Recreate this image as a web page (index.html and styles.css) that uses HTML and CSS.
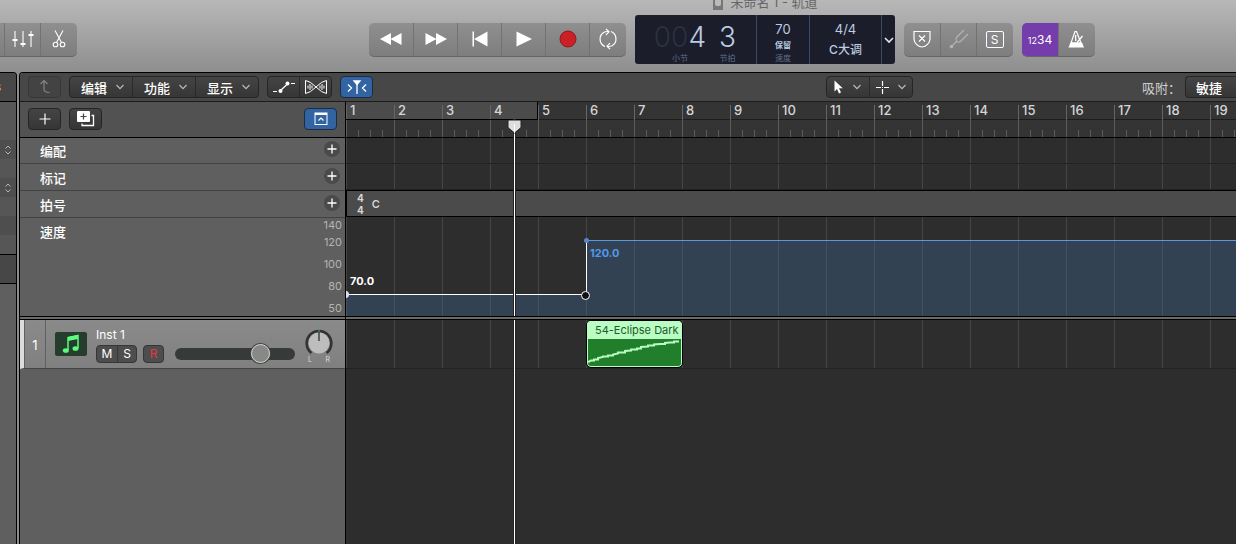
FILE: index.html
```html
<!DOCTYPE html>
<html lang="zh-CN">

<head>
    <meta charset="UTF-8">
    <meta name="viewport" content="width=device-width, initial-scale=1.0">
    <title>未命名 1 - 轨道</title>
    <link rel="stylesheet" href="styles.css">
</head>

<body>
    <!-- shared small glyphs -->
    <svg class="defs" width="0" height="0">
        <symbol id="chevron" viewBox="0 0 10 8"><path d="M1.5 2L5 5.7L8.500 2" fill="none" stroke="currentColor" stroke-width="1.2"/></symbol>
        <symbol id="plus" viewBox="0 0 16 16"><path d="M8 3.500V12.500M3.500 8H12.500" fill="none" stroke="#fff" stroke-width="1.300"/></symbol>
        <symbol id="updown" viewBox="0 0 8 10"><path d="M1.500 3.500L4 1L6.500 3.500M1.500 6.500L4 9L6.500 6.500" fill="none" stroke="#b4b4b4"/></symbol>
    </svg>

    <header class="topbar">
        <div class="title">
            <svg width="12" height="14" viewBox="0 0 12 14"><rect x="1" y="0" width="10" height="13" fill="#777"/><rect x="3" y="2" width="6" height="7" rx="2" fill="#bbb"/></svg>
            <span>未命名 1 - 轨道</span>
        </div>
        <div class="controls">
            <div class="button-group left-group">
                <button aria-label="智能控制"></button>
                <button aria-label="混音器">
                    <svg width="22" height="18" viewBox="0 0 22 18"><path d="M3 1V17M11 1V17M19 1V17" stroke="#fff" stroke-width="1.100"/><path d="M.5 10H5.500M8.500 14H13.500M16.500 5H21.500" stroke="#fff" stroke-width="2"/></svg>
                </button>
                <button aria-label="编辑器">
                    <svg width="14" height="18" viewBox="0 0 14 18" fill="none" stroke="#fff" stroke-width="1.100"><path d="M3 .5L9.500 12.500M11 .5L4.500 12.500"/><circle cx="3.500" cy="14.500" r="2.300"/><circle cx="10.500" cy="14.500" r="2.300"/></svg>
                </button>
            </div>
            <div class="spacer-left"></div>
            <div class="button-group transport">
                <button aria-label="倒回"><svg width="22" height="12" viewBox="0 0 22 12" fill="#fff"><path d="M11 0V12L0 6zM21.500 0V12L10.500 6z"/></svg></button>
                <button aria-label="快进"><svg width="22" height="12" viewBox="0 0 22 12" fill="#fff"><path d="M.5 0V12L11.500 6zM11 0V12L22 6z"/></svg></button>
                <button aria-label="跳到开头"><svg width="16" height="16" viewBox="0 0 16 16" fill="#fff"><path d="M.500 .5H2V15.500H.5zM15.500 .5V15.500L2 8z"/></svg></button>
                <button aria-label="播放"><svg width="16" height="16" viewBox="0 0 16 16" fill="#fff"><path d="M.5 .5V15.500L16 8z"/></svg></button>
                <button aria-label="录音"><svg width="18" height="18" viewBox="0 0 18 18"><circle cx="9" cy="9" r="8" fill="#cb2026" stroke="#8d1c1f"/></svg></button>
                <button aria-label="循环"><svg width="20" height="22" viewBox="0 0 20 22" fill="none" stroke="#fff" stroke-width="1.200"><path d="M7 18.500A8 8 0 0 1 6 4.200Q8 3.200 10.500 3.600M13 3.500A8 8 0 0 1 14 17.800Q12 18.800 9.500 18.400M8 .8L11 3.800L8 6.800M12 15.200L9 18.200L12 21.200"/></svg></button>
            </div>
            <div class="lcd">
                <div class="lcd-position">
                    <div class="lcd-cell"><span class="digits"><i>00</i>4</span><small>小节</small></div>
                    <div class="lcd-cell"><span class="digits">3</span><small>节拍</small></div>
                </div>
                <div class="lcd-tempo"><span>70</span><b>保留</b><small>速度</small></div>
                <div class="lcd-key"><span>4/4</span><span class="key">C大调</span></div>
                <button class="lcd-more" aria-label="显示模式"><svg width="10" height="8" viewBox="0 0 10 8"><path d="M1 2L5 6L9 2" fill="none" stroke="#dfe6f2" stroke-width="1.600"/></svg></button>
            </div>
            <div class="button-group modes">
                <button aria-label="替换"><svg width="18" height="18" viewBox="0 0 18 18" fill="none" stroke="#fff" stroke-width="1.200"><path d="M1 1.500H17V9C17 13 13 16.500 9 17C5 16.500 1 13 1 9zM6 5.500L12 11.500M12 5.500L6 11.500"/></svg></button>
                <button aria-label="调音器"><svg width="20" height="20" viewBox="0 0 20 20" fill="none" stroke="#b3b3b3" stroke-width="1.200"><path d="M2 18L7.500 12.500M15 1L7.500 8.500Q6.500 10 7.500 12.500Q10 13.500 11.500 12.500L19 5"/><circle cx="2.500" cy="17.500" r="1.200" fill="#b3b3b3"/></svg></button>
                <button aria-label="独奏"><span class="solo">S</span></button>
            </div>
            <div class="button-group counts">
                <button class="count-in"><span><small>12</small>34</span></button>
                <button aria-label="节拍器"><svg width="18" height="18" viewBox="0 0 18 18"><path d="M3 13L7 1.500H8.500L13 13z" fill="none" stroke="#fff" stroke-width="1.200"/><path d="M2.500 12.500H14L16 17.500H.5z" fill="#fff"/><path d="M7.700 5V11M9 12.500L14.500 6" stroke="#fff" stroke-width="1.300"/></svg></button>
            </div>
            <div class="spacer-right"></div>
        </div>
    </header>

    <div class="workspace">
        <aside class="inspector">
            <div class="inspector-head">s</div>
            <div class="inspector-rows">
                <div></div>
                <div></div>
                <div class="dark"><svg width="8" height="10"><use href="#updown"/></svg></div>
                <div></div>
                <div class="dark"><svg width="8" height="10"><use href="#updown"/></svg></div>
                <div></div>
                <div class="dark"></div>
                <div></div>
            </div>
            <div class="inspector-foot"></div>
        </aside>

        <main class="tracks">
            <div class="menubar">
                <button class="tool up" aria-label="上一级"><svg width="12" height="16" viewBox="0 0 12 16" fill="none" stroke="#858585" stroke-width="1.200"><path d="M1.500 5L5 1.500L8.500 5M5 1.500V10Q5 13.500 10.500 13.500"/></svg></button>
                <div class="tool-group menus">
                    <button>编辑<svg width="10" height="8"><use href="#chevron"/></svg></button>
                    <button>功能<svg width="10" height="8"><use href="#chevron"/></svg></button>
                    <button>显示<svg width="10" height="8"><use href="#chevron"/></svg></button>
                </div>
                <div class="tool-group views">
                    <button aria-label="自动化"><svg width="24" height="14" viewBox="0 0 24 14"><path d="M1 11.500H5M8 11L16 3.500M19 3.500H23" stroke="#fff" stroke-width="1.200" fill="none"/><circle cx="8.500" cy="11" r="2" fill="#fff"/><circle cx="15.500" cy="3.500" r="2" fill="#fff"/></svg></button>
                    <button aria-label="Flex"><svg width="22" height="14" viewBox="0 0 22 14" fill="none" stroke="#fff"><path d="M.5 .5Q5 1 11 7Q17 13 21.500 13.500V.5Q17 1 11 7Q5 13 .5 13.500z"/><path d="M3 5.500V8.500M5 4V10M7 5.500V8.500M15 5.500V8.500M17 4V10M19 5.500V8.500"/></svg></button>
                </div>
                <button class="tool active catch" aria-label="跟随播放头"><svg width="20" height="14" viewBox="0 0 20 14" fill="none" stroke="#fff" stroke-width="1.300"><path d="M1 4.500L4.500 8L1 11.500M19 4.500L15.500 8L19 11.500"/><path d="M7 1H13L10 4.500z" fill="#fff"/><path d="M10 1V14"/></svg></button>
                <div class="spacer-tools"></div>
                <div class="tool-group cursors">
                    <button aria-label="指针工具"><svg width="10" height="14" viewBox="0 0 10 14"><path d="M.5 .5V11.500L3 9L5 13.500L7 12.500L5 8.300H8.800z" fill="#fff"/></svg><svg width="10" height="8"><use href="#chevron"/></svg></button>
                    <button aria-label="十字工具"><svg width="13" height="13" viewBox="0 0 13 13"><path d="M6.500 0V5M6.500 8V13M0 6.500H5M8 6.500H13M6 6.500H7" stroke="#fff" stroke-width="1.200"/></svg><svg width="10" height="8"><use href="#chevron"/></svg></button>
                </div>
                <div class="spacer-snap"></div>
                <span class="snap-label">吸附：</span>
                <button class="tool snap">敏捷</button>
            </div>

            <div class="arrange">
                <section class="headers">
                    <div class="header-tools">
                        <button class="tool" aria-label="添加轨道"><svg width="12" height="12" viewBox="0 0 12 12"><path d="M6 .5V11.500M.5 6H11.500" stroke="#fff" stroke-width="1.200"/></svg></button>
                        <button class="tool" aria-label="复制轨道"><svg width="18" height="16" viewBox="0 0 18 16"><rect width="13" height="11" rx="1" fill="#fff"/><path d="M6.500 2.500V8.500M3.500 5.500H9.500" stroke="#444" stroke-width="1.200"/><path d="M14.500 4.500H16.500V14.500H5V12.500" fill="none" stroke="#fff" stroke-width="1.300"/></svg></button>
                        <button class="tool active global" aria-label="显示全局轨道"><svg width="14" height="14" viewBox="0 0 14 14" fill="none" stroke="#fff"><rect x="1" y="1" width="12" height="11.500"/><path d="M1 2H13" stroke-width="2"/><path d="M4.500 8.500L7 6L9.500 8.500" stroke-width="1.200"/></svg></button>
                    </div>
                    <div class="global-row first">编配<button aria-label="添加编配"><svg width="16" height="16"><use href="#plus"/></svg></button></div>
                    <div class="global-row">标记<button aria-label="添加标记"><svg width="16" height="16"><use href="#plus"/></svg></button></div>
                    <div class="global-row">拍号<button aria-label="添加拍号"><svg width="16" height="16"><use href="#plus"/></svg></button></div>
                    <div class="tempo-row">
                        <span>速度</span>
                        <div class="scale"><span>140</span><span>120</span><span>100</span><span>80</span><span>50</span></div>
                    </div>
                    <div class="splitter"></div>
                    <div class="track">
                        <div class="track-number">1</div>
                        <div class="track-icon"><svg width="18" height="20" viewBox="0 0 18 20"><path d="M6 16V3.500L16 1.500V14" fill="none" stroke="#5dfb7b" stroke-width="1.500"/><path d="M6 3L16 1V5L6 7z" fill="#5dfb7b"/><ellipse cx="3.800" cy="16.500" rx="3" ry="2.300" fill="#5dfb7b"/><ellipse cx="13.500" cy="14.500" rx="3" ry="2.300" fill="#5dfb7b"/></svg></div>
                        <div class="track-main">
                            <div class="track-name">Inst 1</div>
                            <div class="track-controls">
                                <div class="mute-solo"><button>M</button><button>S</button></div>
                                <button class="record">R</button>
                                <input type="range" class="volume" min="0" max="100" value="75" aria-label="音量">
                            </div>
                        </div>
                        <div class="pan">
                            <svg width="28" height="27" viewBox="0 0 28 27"><path d="M6.500 24A12.300 12.300 0 1 1 21.500 24" fill="none" stroke="#333" stroke-width="2.600"/><circle cx="14" cy="14" r="10.500" fill="#bdbdbd"/><path d="M14 1V12" stroke="#222" stroke-width="1.200"/><path d="M14 0V3" stroke="#4fae5b"/></svg>
                            <div class="pan-labels"><span>L</span><span>R</span></div>
                        </div>
                    </div>
                </section>

                <section class="timeline">
                    <div class="ruler">
                        <div class="bars">
                            <span class="lit">1</span><span class="lit">2</span><span class="lit">3</span><span class="lit last">4</span><span>5</span><span>6</span><span>7</span><span>8</span><span>9</span><span>10</span><span>11</span><span>12</span><span>13</span><span>14</span><span>15</span><span>16</span><span>17</span><span>18</span><span>19</span>
                        </div>
                        <div class="beats"></div>
                    </div>
                    <div class="lane"></div>
                    <div class="lane"></div>
                    <div class="signature">
                        <div class="meter"><span>4</span><span>4</span></div>
                        <span class="key-mark">C</span>
                    </div>
                    <div class="tempo-lane">
                        <div class="tempo-slow"><span>70.0</span></div>
                        <div class="tempo-fast"><span>120.0</span></div>
                    </div>
                    <div class="splitter"></div>
                    <div class="track-lane">
                        <div class="region">
                            <div class="region-name">54-Eclipse Dark</div>
                            <svg viewBox="0 0 93 27" width="93" height="27"><path d="M0 23L3 21.500H6V20.500H10V19L15 18V17.500H20V16.500H25V15.500L30 14.500V13.500H37V12L43 11.500V10.500H49V9.500H53V8L60 7.500V6.500H66V5.500L72 5H77V4L82 3.500H86V2.500H91" fill="none" stroke="#b9fcc4" stroke-width="2"/></svg>
                        </div>
                    </div>
                    <div class="playhead"><svg width="15" height="14" viewBox="0 0 15 14"><path d="M1 0H14V6.500Q14 7.500 13 8.500L7.500 13L2 8.500Q1 7.500 1 6.500z" fill="#dedede" stroke="#222"/><path d="M7.500 4V13" stroke="#fff"/></svg></div>
                </section>
            </div>
        </main>
    </div>
</body>

</html>
```

FILE: styles.css
```css
* {
    margin: 0;
    padding: 0;
    box-sizing: border-box;
}

body {
    min-height: 100vh;
    display: flex;
    flex-direction: column;
    overflow: hidden;
    background: #8e8e8e;
    color: #fff;
    font-family: Inter, "Noto Sans CJK SC", sans-serif;
    font-size: 13px;
}

button {
    display: flex;
    align-items: center;
    justify-content: center;
    border: none;
    background: none;
    color: inherit;
    font: inherit;
}

svg {
    display: block;
    flex: none;
}

.defs {
    position: absolute;
}

/* control bar */
.topbar {
    height: 72px;
    background: linear-gradient(#b8b8b8, #8e8e8e);
}

.title {
    height: 15px;
    padding: 0 0 4px 294px;
    display: flex;
    justify-content: center;
    align-items: flex-end;
    gap: 6px;
    color: #666;
    font-size: 13px;
    line-height: 18px;
}

.controls {
    display: flex;
    align-items: center;
    height: 49px;
}

.spacer-left {
    flex: 292;
}

.spacer-right {
    flex: 141;
}

.button-group {
    display: flex;
    height: 34px;
    border-radius: 5px;
    background: linear-gradient(#8f8f8f, #7e7e7e);
    border-bottom: 1px solid #666;
    overflow: hidden;
}

.button-group button {
    width: 36px;
    border-left: 1px solid #727272;
}

.button-group button:first-child {
    border-left: none;
}

.left-group {
    width: 77px;
    border-radius: 0 5px 5px 0;
}

.left-group button:first-child {
    width: 4px;
}

.transport {
    width: 257px;
    margin-right: 9px;
}

.transport button {
    width: 44px;
}

.transport button:last-child {
    width: 37px;
}

.lcd {
    display: flex;
    width: 260px;
    height: 49px;
    margin-right: 9px;
    border-radius: 3px;
    background: #1b1d2b;
    color: #bccce2;
    text-align: center;
}

.lcd > * {
    border-left: 1px solid #3c4a63;
}

.lcd > :first-child {
    border-left: none;
}

.lcd small {
    display: block;
    color: #5f6d88;
    font-size: 8px;
    line-height: 10px;
}

.lcd-position {
    display: flex;
    justify-content: flex-end;
    gap: 13px;
    width: 121px;
    padding-right: 20px;
}

.lcd-cell {
    padding-top: 6px;
}

.digits {
    display: block;
    font-size: 28px;
    font-weight: 300;
    line-height: 32px;
}

.digits i {
    color: #2c3040;
    font-style: normal;
}

.lcd-tempo {
    width: 53px;
    padding-top: 6px;
}

.lcd-tempo span,
.lcd-tempo b {
    display: block;
    font-size: 13px;
    line-height: 17px;
}

.lcd-tempo b {
    font-size: 8px;
    line-height: 15px;
}

.lcd-key {
    width: 72px;
    padding-top: 6px;
}

.lcd-key span {
    display: block;
    font-size: 13px;
    line-height: 17px;
}

.lcd-key .key {
    font-size: 12px;
    font-weight: 500;
    line-height: 24px;
}

.lcd-more {
    flex: 1;
}

.modes {
    width: 109px;
    margin-right: 9px;
}

.solo {
    width: 18px;
    height: 17px;
    border: 1px solid #fff;
    border-radius: 2px;
    font-size: 12px;
    line-height: 15px;
}

.counts {
    width: 73px;
}

.button-group .count-in {
    background: #753cab;
    font-size: 12px;
}

.count-in small {
    font-size: 9px;
}

/* window body */
.workspace {
    flex: 1;
    display: flex;
    gap: 2px;
}

.inspector {
    display: flex;
    flex-direction: column;
    width: 17px;
    border: solid #000;
    border-width: 1px 1px 0 0;
    border-top-right-radius: 4px;
    background: #5f5f5f;
    overflow: hidden;
}

.inspector-head {
    height: 29px;
    border-bottom: 1px solid #000;
    background: #474747;
    color: #d9a47e;
    text-indent: -5px;
    font-size: 12px;
    line-height: 28px;
}

.inspector-rows {
    background: #565656;
}

.inspector-rows div {
    display: flex;
    align-items: center;
    justify-content: flex-end;
    height: 19px;
    padding-right: 4px;
}

.inspector-rows .dark {
    background: #4e4e4e;
}

.inspector-foot {
    height: 30px;
    border: solid #000;
    border-width: 1px 0;
    background: #474747;
}

.tracks {
    flex: 1;
    min-width: 0;
    display: flex;
    flex-direction: column;
    border: solid #000;
    border-width: 1px 0 0 1px;
    border-top-left-radius: 4px;
    overflow: hidden;
}

.menubar {
    display: flex;
    align-items: center;
    height: 29px;
    padding-left: 8px;
    border-bottom: 1px solid #1c1c1c;
    background: #474747;
}

.tool,
.tool-group {
    height: 22px;
    border: 1px solid #252525;
    border-radius: 4px;
    background: linear-gradient(#444, #363636);
}

.tool {
    width: 33px;
}

.tool.active {
    background: #3264a4;
    border-color: #1c2c44;
}

.tool.up {
    background: #434343;
    border-color: #383838;
}

.tool-group {
    display: flex;
    margin-left: 8px;
}

.tool-group button {
    flex: 1;
    border-left: 1px solid #2a2a2a;
}

.tool-group button:first-child {
    border-left: none;
}

.menus svg,
.cursors svg:last-child {
    color: #bbb;
}

.menus {
    width: 190px;
}

.menus button {
    padding-left: 4px;
    gap: 8px;
    font-weight: 500;
}

.views {
    width: 65px;
}

.catch {
    margin-left: 8px;
}

.spacer-tools {
    flex: 446;
}

.cursors {
    width: 87px;
}

.cursors button {
    gap: 8px;
}

.spacer-snap {
    flex: 229;
}

.snap-label {
    margin-right: 4px;
    color: #d0d0d0;
}

.snap {
    width: 51px;
    padding-right: 4px;
    border-right: none;
    border-radius: 4px 0 0 4px;
    font-weight: 500;
}

.arrange {
    flex: 1;
    display: flex;
}

/* track headers */
.headers {
    flex: none;
    width: 326px;
    border-right: 1px solid #000;
    background: #5f5f5f;
}

.header-tools {
    display: flex;
    align-items: center;
    gap: 8px;
    height: 36px;
    padding: 0 8px 2px;
    border-bottom: 1px solid #000;
    background: #525252;
}

.global {
    margin-left: auto;
}

.global-row {
    display: flex;
    align-items: center;
    justify-content: space-between;
    height: 27px;
    padding: 0 5px 0 20px;
    border-bottom: 1px solid #424242;
    font-weight: 500;
}

.global-row.first {
    height: 26px;
}

.global-row button {
    width: 16px;
    height: 16px;
    margin-bottom: 3px;
    border-radius: 50%;
    background: #4a4a4a;
}

.tempo-row {
    display: flex;
    justify-content: space-between;
    height: 98px;
    padding: 0 3px 0 20px;
    font-weight: 500;
    line-height: 28px;
}

.scale {
    display: flex;
    flex-direction: column;
    gap: 7px;
    color: #b4b4b4;
    font-size: 11px;
    font-weight: 400;
    line-height: 15px;
    text-align: right;
}

/* the top two marks stand closer together */
.scale span:first-child {
    margin-bottom: -5px;
}

.splitter {
    position: relative;
    z-index: 2;
    height: 4px;
    border: solid #000;
    border-width: 1px 0;
    background: #6b6b6b;
}

.track {
    display: flex;
    align-items: center;
    height: 49px;
    border-left: 4px solid #dcdcdc;
    border-bottom: 1px solid #444;
    background: linear-gradient(#8a8a8a, #808080);
}

.track-number {
    width: 22px;
    height: 48px;
    border: solid #606060;
    border-width: 0 1px;
    line-height: 51px;
    text-align: center;
}

.track-icon {
    display: flex;
    align-items: center;
    justify-content: center;
    width: 32px;
    height: 24px;
    margin: 0 9px;
    border-radius: 2px;
    background: #243d2c;
}

.track-name {
    font-size: 12px;
    line-height: 18px;
}

.track-controls {
    display: flex;
    align-items: center;
    margin-top: 1px;
}

.mute-solo,
.record {
    display: flex;
    height: 18px;
    border: 1px solid #363636;
    border-radius: 4px;
    background: #4d4d4d;
    font-size: 12px;
}

.mute-solo button {
    width: 20px;
}

.mute-solo button + button {
    width: 19px;
    border-left: 1px solid #363636;
}

.record {
    width: 21px;
    margin-left: 6px;
    color: #e23b3b;
}

.volume {
    appearance: none;
    width: 120px;
    height: 12px;
    margin-left: 11px;
    border-radius: 6px;
    background: #363a38;
}

.volume::-webkit-slider-thumb {
    appearance: none;
    width: 19px;
    height: 19px;
    border: 1px solid #d8d8d8;
    border-radius: 50%;
    background: #868986;
    box-shadow: 0 0 0 1px #444;
}

.pan {
    width: 28px;
    margin-left: 10px;
    padding-top: 4px;
}

.pan-labels {
    display: flex;
    justify-content: space-between;
    padding: 0 3px;
    color: #ddd;
    font-size: 7px;
    line-height: 7px;
}

/* timeline: one bar is 48px wide, one beat 12px */
.timeline {
    position: relative;
    flex: 1;
    min-width: 0;
    background: #2d2d2d;
    overflow: hidden;
}

.ruler {
    height: 36px;
    border-bottom: 1px solid #000;
    background: #343434;
}

.bars {
    display: flex;
    height: 18px;
    border-bottom: 1px solid #1d1d1d;
}

.bars span {
    flex: none;
    width: 48px;
    height: 18px;
    padding-left: 4px;
    background: linear-gradient(#666, #666) 0 3px / 1px 100% no-repeat;
    color: #d6d6d6;
    font-weight: 500;
    line-height: 16px;
}

.bars .lit {
    background-color: #4b4b4b;
    border-bottom: 1px solid #000;
}

.bars .last {
    border-right: 1px solid #000;
}

.beats {
    height: 17px;
    background:
        repeating-linear-gradient(90deg, #5c5c5c 0 1px, transparent 1px 48px),
        repeating-linear-gradient(90deg, #5c5c5c 0 1px, transparent 1px 12px) 0 100% / 100% 7px no-repeat;
}

.lane,
.tempo-lane,
.track-lane {
    background: repeating-linear-gradient(90deg, #454545 0 1px, transparent 1px 48px);
}

.lane {
    height: 26px;
    border-bottom: 1px solid #222;
}

.signature {
    display: flex;
    align-items: center;
    gap: 8px;
    height: 27px;
    padding-left: 10px;
    border: 1px solid #000;
    border-right: none;
    background: #4b4b4b;
    color: #d6d6d6;
    font-size: 11px;
}

.meter {
    display: flex;
    flex-direction: column;
    font-size: 10px;
    font-weight: 700;
    line-height: 12px;
}

.key-mark {
    font-weight: 600;
}

.tempo-lane {
    display: flex;
    align-items: flex-end;
    height: 99px;
    font-size: 11px;
    font-weight: 700;
}

.tempo-slow,
.tempo-fast {
    position: relative;
    background: rgba(62, 107, 154, 0.35);
}

.tempo-slow {
    z-index: 1;
    flex: none;
    width: 240px;
    height: 22px;
    border-top: 1px solid #fff;
}

.tempo-fast {
    flex: 1;
    height: 76px;
    padding: 5px 0 0 4px;
    border-top: 1px solid #5b97e0;
    color: #5498ea;
}

/* the label of the slow segment floats over its line */
.tempo-slow span {
    position: absolute;
    left: 4px;
    bottom: 28px;
}

/* tempo points and the step between them */
.tempo-slow::before,
.tempo-slow::after,
.tempo-fast::before,
.tempo-fast::after {
    content: "";
    position: absolute;
    border-radius: 50%;
}

.tempo-slow::before {
    left: -4px;
    top: -4px;
    width: 7px;
    height: 7px;
    background: #d5e2f5;
}

.tempo-slow::after {
    right: -4px;
    top: -4px;
    width: 7px;
    height: 7px;
    border: 1px solid #fff;
    background: #111;
}

.tempo-fast::before {
    left: 0;
    top: 0;
    width: 1px;
    height: 53px;
    border-radius: 0;
    background: #fff;
}

.tempo-fast::after {
    left: -2px;
    top: -3px;
    width: 5px;
    height: 5px;
    background: #5b85cf;
}

.track-lane {
    height: 49px;
    padding-left: 240px;
    border-bottom: 1px solid #222;
}

.region {
    width: 97px;
    height: 48px;
    border: 1px solid #000;
    border-radius: 5px;
    background: #217f2b;
    box-shadow: inset 0 0 0 1px #b9fcc4;
    overflow: hidden;
}

.region-name {
    height: 18px;
    padding-left: 8px;
    background: #b9fcc4;
    color: #1d5c26;
    font-size: 11px;
    line-height: 18px;
    white-space: nowrap;
}

.region svg {
    margin-left: 1px;
}

.playhead {
    position: absolute;
    z-index: 1;
    top: 18px;
    bottom: 0;
    left: 168px;
    width: 1px;
    background: #fff;
    box-shadow: 0 0 0 1px #222;
}

.playhead svg {
    margin-left: -7px;
}
```
